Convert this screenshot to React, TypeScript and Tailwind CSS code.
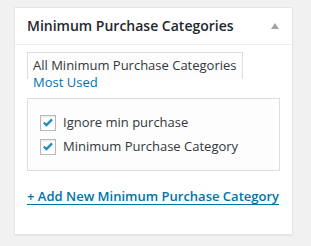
const CheckRow = ({ label }: { label: string }) => (
  <label className="flex h-6 items-center">
    <span className="flex h-4 w-4 items-center justify-center border border-[#b4b9be] bg-white shadow-[inset_0_1px_2px_rgba(0,0,0,0.1)]">
      <svg viewBox="0 0 16 16" className="h-[15px] w-[15px]">
        <path d="M3.2 8.2 L6.3 11 L12.6 4.4" fill="none" stroke="#1e8cbe" strokeWidth="2.6" strokeLinecap="butt" />
      </svg>
    </span>
    <span className="ml-[7px] text-[13px] text-[#32373c]">{label}</span>
  </label>
);

const App = () => {
  return (
    <div className="min-h-[246px] w-[311px] bg-[#f1f1f1] pt-[7px] pl-[14px] font-['Open_Sans',sans-serif]">
      <div className="h-[228px] w-[279px] border border-[#e5e5e5] bg-white shadow-[0_1px_1px_rgba(0,0,0,0.04)]">
        {/* HEADER */}
        <div className="flex items-center justify-between border-b border-[#eeeeee] px-3 py-2">
          <h2 className="text-[14px] font-semibold leading-[1.4] text-[#23282d]">
            Minimum Purchase Categories
          </h2>
          <span className="mr-[1px] h-0 w-0 border-x-[4px] border-b-[6px] border-x-transparent border-b-[#a0a5aa]" />
        </div>

        {/* BODY */}
        <div className="px-3 pt-3">
          <div className="text-[13px] leading-[1.35]">
            <span className="border-x border-t border-[#dddddd] bg-[#fdfdfd] px-[5px] pt-[3px] pb-[5px] text-[#32373c]">
              All Minimum Purchase Categories
            </span>
            <div className="relative pl-[6px] text-[#0073aa]">Most Used</div>
          </div>

          <div className="mt-[6px] h-[73px] border border-[#dddddd] bg-[#fdfdfd] pl-3 pt-3">
            <CheckRow label="Ignore min purchase" />
            <CheckRow label="Minimum Purchase Category" />
          </div>

          <a
            href="#"
            className="mt-4 block text-[13px] font-semibold leading-[1.5] text-[#0073aa] underline underline-offset-[3px]"
          >
            + Add New Minimum Purchase Category
          </a>
        </div>
      </div>
    </div>
  );
};

export default App;
